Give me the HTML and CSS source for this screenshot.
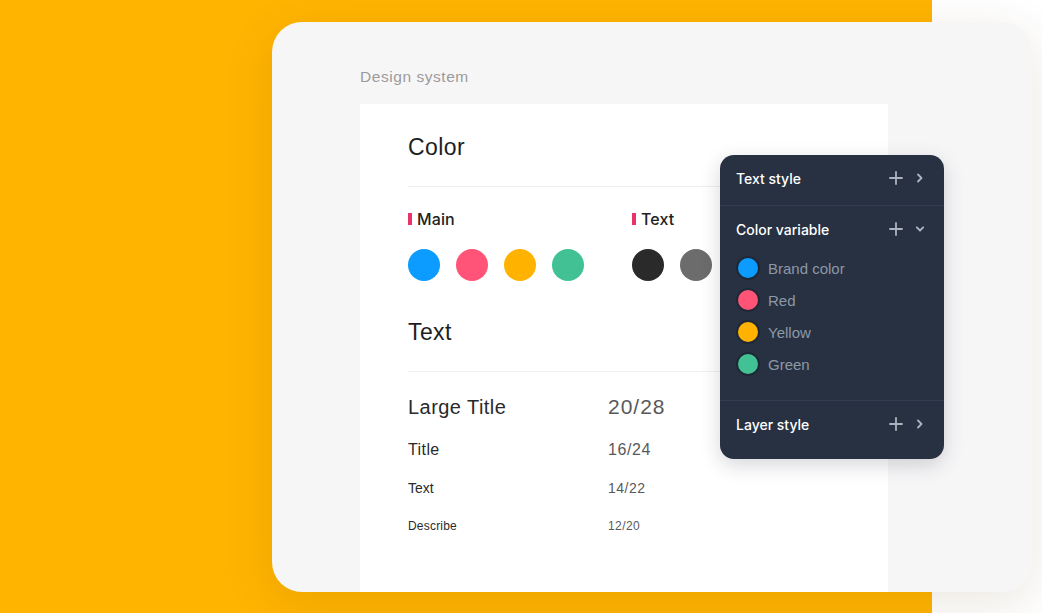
FILE: index.html
```html
<!DOCTYPE html>
<html lang="en">
<head>
<meta charset="utf-8">
<title>Design system</title>
<link rel="stylesheet" href="styles.css">
</head>
<body>
<div class="stage">
  <div class="card">
    <div class="crumb">Design system</div>
    <div class="sheet">
      <h2 class="heading">Color</h2>
      <div class="rule"></div>
      <div class="groups">
        <div class="group">
          <div class="label"><span class="mark"></span>Main</div>
          <div class="dots">
            <span class="dot blue"></span>
            <span class="dot pink"></span>
            <span class="dot yellow"></span>
            <span class="dot green"></span>
          </div>
        </div>
        <div class="group">
          <div class="label"><span class="mark"></span>Text</div>
          <div class="dots">
            <span class="dot black"></span>
            <span class="dot gray"></span>
          </div>
        </div>
      </div>
      <h2 class="heading heading-text">Text</h2>
      <div class="rule"></div>
      <div class="specs">
        <div class="spec s20"><span class="name">Large Title</span><span class="val">20/28</span></div>
        <div class="spec s16"><span class="name">Title</span><span class="val">16/24</span></div>
        <div class="spec s14"><span class="name">Text</span><span class="val">14/22</span></div>
        <div class="spec s12"><span class="name">Describe</span><span class="val">12/20</span></div>
      </div>
    </div>

    <div class="panel">
      <div class="section sec-first">
        <div class="phead">
          <span class="ptitle">Text style</span>
          <span class="icons">
            <svg class="plus" width="14" height="14" viewBox="0 0 14 14"><path d="M7 1v12M1 7h12" stroke="#AEB4BF" stroke-width="1.8" stroke-linecap="round"/></svg>
            <svg class="chev" width="8" height="10" viewBox="0 0 8 10"><path d="M2 1.5l3.5 3.5-3.5 3.5" fill="none" stroke="#AEB4BF" stroke-width="1.8" stroke-linecap="round" stroke-linejoin="round"/></svg>
          </span>
        </div>
      </div>
      <div class="section sec-colors">
        <div class="phead">
          <span class="ptitle">Color variable</span>
          <span class="icons">
            <svg class="plus" width="14" height="14" viewBox="0 0 14 14"><path d="M7 1v12M1 7h12" stroke="#AEB4BF" stroke-width="1.8" stroke-linecap="round"/></svg>
            <svg class="chev" width="8" height="10" viewBox="0 0 8 10"><path d="M0.8 3.3l3.2 3.2 3.2-3.2" fill="none" stroke="#AEB4BF" stroke-width="1.8" stroke-linecap="round" stroke-linejoin="round"/></svg>
          </span>
        </div>
        <ul class="vars">
          <li><span class="vdot blue"></span>Brand color</li>
          <li><span class="vdot pink"></span>Red</li>
          <li><span class="vdot yellow"></span>Yellow</li>
          <li><span class="vdot green"></span>Green</li>
        </ul>
      </div>
      <div class="section sec-last">
        <div class="phead">
          <span class="ptitle">Layer style</span>
          <span class="icons">
            <svg class="plus" width="14" height="14" viewBox="0 0 14 14"><path d="M7 1v12M1 7h12" stroke="#AEB4BF" stroke-width="1.8" stroke-linecap="round"/></svg>
            <svg class="chev" width="8" height="10" viewBox="0 0 8 10"><path d="M2 1.5l3.5 3.5-3.5 3.5" fill="none" stroke="#AEB4BF" stroke-width="1.8" stroke-linecap="round" stroke-linejoin="round"/></svg>
          </span>
        </div>
      </div>
    </div>
  </div>
</div>
</body>
</html>
```

FILE: styles.css
```css
* { box-sizing: border-box; }
html, body { margin: 0; padding: 0; }
body {
  font-family: "Liberation Sans", Arial, sans-serif;
  background: #fff;
}
.stage {
  width: 1042px;
  height: 613px;
  overflow: hidden;
  background: linear-gradient(to right, #FFB400 0, #FFB400 932px, #ffffff 932px);
  padding: 22px 10px 0 272px;
}
.card {
  position: relative;
  width: 760px;
  height: 570px;
  border-radius: 30px;
  background: #F7F6F7;
  box-shadow: 0 12px 50px rgba(90, 60, 0, 0.12);
  padding: 45px 0 0 88px;
  display: flex;
  flex-direction: column;
}
.crumb {
  font-size: 15.5px;
  line-height: 20px;
  color: #9C9A9C;
  letter-spacing: 0.55px;
}
.sheet {
  margin-top: 17px;
  width: 528px;
  flex: 1;
  background: #fff;
  padding: 28px 48px 0 48px;
}
.heading {
  margin: 0;
  font-weight: normal;
  font-size: 23px;
  line-height: 30px;
  color: #1E1E1E;
  letter-spacing: 0.4px;
}
.heading-text { margin-top: 36px; }
.rule {
  margin-top: 24px;
  height: 1px;
  background: #EFEFEF;
}
.groups {
  display: flex;
  gap: 48px;
  margin-top: 21px;
}
.label {
  display: flex;
  align-items: center;
  font-family: Inter, "Liberation Sans", sans-serif;
  font-weight: 500;
  font-size: 16px;
  line-height: 22px;
  color: #222;
  letter-spacing: 0.1px;
}
.mark {
  width: 4px;
  height: 12px;
  background: #E8336B;
  margin-right: 5px;
}
.dots {
  display: flex;
  gap: 16px;
  margin-top: 19px;
}
.dot {
  width: 32px;
  height: 32px;
  border-radius: 50%;
}
.blue { background: #0C9CFF; }
.pink { background: #FF5478; }
.yellow { background: #FFB300; }
.green { background: #41C194; }
.black { background: #2A2A2A; }
.gray { background: #6C6C6C; }

.specs {
  margin-top: 21px;
  display: flex;
  flex-direction: column;
  gap: 16px;
}
.spec {
  display: grid;
  grid-template-columns: 200px auto;
  color: #2A2A2A;
}
.spec .val { color: #595959; }
.s20 { font-size: 20px; line-height: 28px; }
.s20 .name { letter-spacing: 0.45px; }
.s20 .val { font-size: 21px; letter-spacing: 1px; }
.s16 { font-size: 16px; line-height: 24px; margin-top: 1px; }
.s16 .name { letter-spacing: 0.4px; }
.s16 .val { letter-spacing: 0.6px; }
.s14 { font-size: 14px; line-height: 22px; margin-top: -1px; }
.s14 .val { letter-spacing: 0.5px; }
.s12 { font-size: 12px; line-height: 20px; margin-top: 1px; }
.s12 .name { letter-spacing: 0.2px; }
.s12 .val { letter-spacing: 0.4px; }

.panel {
  position: absolute;
  left: 448px;
  top: 133px;
  width: 224px;
  height: 304px;
  border-radius: 14px;
  background: #273142;
  box-shadow: 0 6px 20px rgba(20, 30, 50, 0.18);
  overflow: hidden;
}
.section { border-bottom: 1px solid #323D4F; }
.section:last-child { border-bottom: none; }
.sec-first { padding-bottom: 4px; }
.sec-colors { padding-bottom: 20px; }
.phead {
  height: 46px;
  display: flex;
  align-items: center;
  justify-content: space-between;
  padding: 0 20px 0 16px;
}
.ptitle {
  font-family: Inter, "Liberation Sans", sans-serif;
  font-weight: 500;
  font-size: 14px;
  color: #FFFFFF;
  letter-spacing: 0;
}
.icons {
  display: flex;
  align-items: center;
  gap: 13px;
}
.plus { display: block; }
.chev { display: block; }
.vars {
  list-style: none;
  margin: 0;
  padding: 0 0 0 18px;
}
.vars li {
  height: 32px;
  display: flex;
  align-items: center;
  font-size: 15px;
  color: #8E97A5;
}
.vdot {
  width: 20px;
  height: 20px;
  border-radius: 50%;
  margin-right: 10px;
  box-shadow: 0 0 0 2px rgba(0, 0, 0, 0.18);
}
```
